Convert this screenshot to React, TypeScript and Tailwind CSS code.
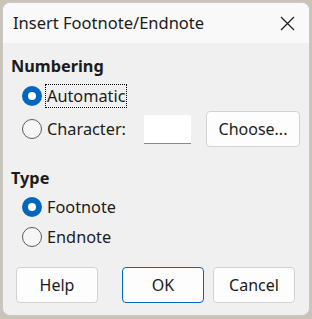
import React from 'react';

function Radio({ checked, label, focus }: { checked?: boolean; label: string; focus?: boolean }) {
  return (
    <div className="flex items-center h-[30px]">
      {checked ? (
        <span className="w-[20px] h-[20px] rounded-full bg-[#0067c0] flex items-center justify-center">
          <span className="w-[8px] h-[8px] rounded-full bg-white" />
        </span>
      ) : (
        <span className="w-[20px] h-[20px] rounded-full border border-[#5d5d5d] bg-[#f6f6f6]" />
      )}
      <span className={`ml-[4px] px-[1px] leading-[22px] ${focus ? 'outline outline-1 outline-dotted outline-black' : ''}`}>
        {label}
      </span>
    </div>
  );
}

function Btn({ label, primary, className = '' }: { label: string; primary?: boolean; className?: string }) {
  return (
    <button
      className={`h-[36px] w-[82px] rounded-[4px] bg-[#fdfdfd] text-[16px] text-[#1b1b1b] flex items-center justify-center ${
        primary ? 'border border-[#0067c0]' : 'border border-[#d2d2d2]'
      } ${className}`}
    >
      {label}
    </button>
  );
}

export default function App() {
  return (
    <div className="w-[312px] h-[319px] bg-[#c9c3b8] p-[2px] pb-[3px]" style={{ fontFamily: '"Noto Sans", "Open Sans", sans-serif' }}>
      <div className="w-[308px] h-[314px] rounded-[8px] bg-[#f0f0f0] border border-[#c8c8c8] overflow-hidden flex flex-col text-[#1b1b1b]">
        {/* Title bar */}
        <div className="h-[40px] bg-[#f9f9f9] flex items-center justify-between pl-[10px] pr-[14px] shrink-0">
          <span className="text-[16.5px]">Insert Footnote/Endnote</span>
          <svg width="15" height="15" viewBox="0 0 15 15" fill="none" stroke="#1b1b1b" strokeWidth="1.2">
            <path d="M1 1L14 14M14 1L1 14" />
          </svg>
        </div>

        <div className="px-[8px] pt-[12px] text-[16.3px]">
          <div className="font-bold leading-[22px]">Numbering</div>
          <div className="pl-[11px] mt-[4px]">
            <Radio checked label="Automatic" focus />
            <div className="flex items-center">
              <Radio label="Character:" />
              <div className="ml-[17px] w-[47px] h-[29px] bg-white border-b border-[#8a8a8a]" />
              <Btn label="Choose..." className="ml-[15px] !w-[94px] h-[35px]" />
            </div>
          </div>

          <div className="font-bold leading-[22px] mt-[20px]">Type</div>
          <div className="pl-[11px] mt-[3px]">
            <Radio checked label="Footnote" />
            <Radio label="Endnote" />
          </div>
        </div>

        <div className="flex px-[13px] mt-[15px]">
          <Btn label="Help" />
          <Btn label="OK" primary className="ml-[24px]" />
          <Btn label="Cancel" className="ml-[9px]" />
        </div>
      </div>
    </div>
  );
}
